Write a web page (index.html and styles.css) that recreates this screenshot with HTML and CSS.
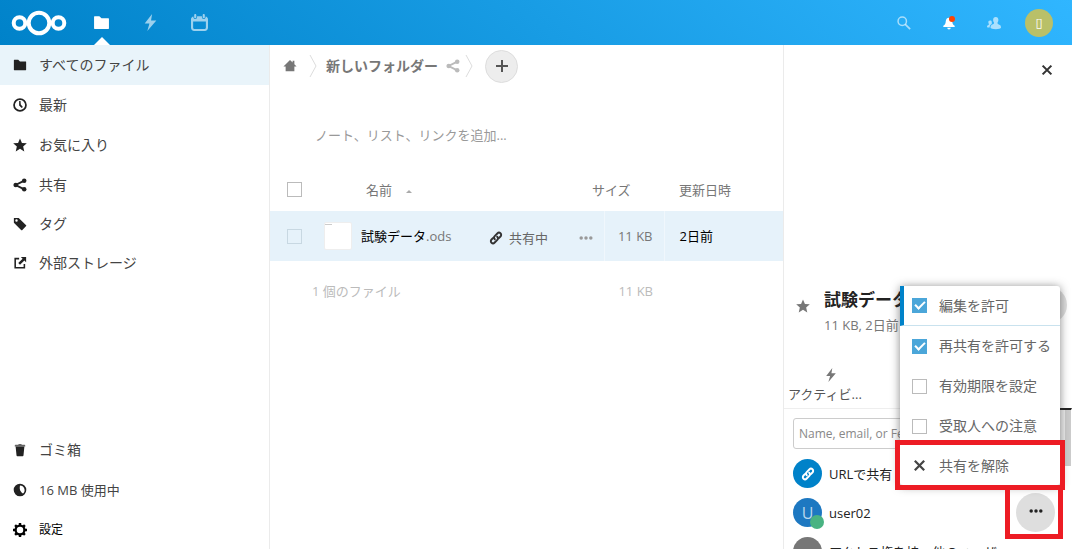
FILE: index.html
```html
<!DOCTYPE html>
<html lang="ja">
<head>
<meta charset="utf-8">
<title>ファイル</title>
<link rel="stylesheet" href="styles.css">
</head>
<body>
<svg class="defs" aria-hidden="true">
  <symbol id="folder" viewBox="0 0 16 16"><path d="M1.500 2C1.200 2 1 2.300 1 2.500v11c0 .3.2.5.5.5h13c.3 0 .5-.2.5-.5v-9c0-.3-.2-.5-.5-.5H8L6 2z"/></symbol>
  <symbol id="bolt" viewBox="0 0 16 16"><path d="M9.500 0 2.500 9h4.500l-2 7 8.500-10H8.500z"/></symbol>
  <symbol id="calendar" viewBox="0 0 16 16"><path d="M4 0C3.400 0 3 .5 3 1v2c0 .6.4 1 1 1s1-.4 1-1V1c0-.5-.4-1-1-1zm8 0c-.6 0-1 .5-1 1v2c0 .6.4 1 1 1s1-.4 1-1V1c0-.5-.4-1-1-1zM5.700 2.200V3c0 1-.8 1.700-1.700 1.700S2.300 4 2.300 3v-.6C1 2.600 0 3.700 0 5v8c0 1.700 1.300 3 3 3h10c1.700 0 3-1.300 3-3V5c0-1.300-1-2.400-2.300-2.600V3c0 1-.8 1.700-1.700 1.700S10.300 4 10.300 3v-.8zM2 7h12v6c0 .6-.4 1-1 1H3c-.6 0-1-.4-1-1z"/></symbol>
  <symbol id="clock" viewBox="0 0 16 16"><circle cx="8" cy="8" r="6.800" fill="none" stroke="currentColor" stroke-width="2"/><path d="M7 3.500h1.600l.3 4 2.400 2.800-1.400 1.200L7 8.500z"/></symbol>
  <symbol id="star" viewBox="0 0 16 16"><path d="m8 .5 2.200 5.100 5.600.5-4.200 3.700 1.300 5.500L8 12.400l-4.900 2.900 1.300-5.500L.2 6.100l5.600-.5z"/></symbol>
  <symbol id="share" viewBox="0 0 16 16"><circle cx="3.200" cy="8" r="2.700"/><circle cx="12.800" cy="3.200" r="2.600"/><circle cx="12.800" cy="12.800" r="2.600"/><path d="m13 3-10 5 10 5" fill="none" stroke="currentColor" stroke-width="2.200"/></symbol>
  <symbol id="tag" viewBox="0 0 16 16"><path fill-rule="evenodd" d="M1.500 1C1.200 1 1 1.200 1 1.500v5L9.500 15c.3.3.6.3.9 0l4.600-4.600c.3-.3.3-.6 0-.9L6.500 1zM4 2.600a1.400 1.400 0 1 1 0 2.800 1.400 1.400 0 0 1 0-2.800z"/></symbol>
  <symbol id="external" viewBox="0 0 16 16"><path d="M7 3H2.500v10.500H13V9" fill="none" stroke="currentColor" stroke-width="1.800"/><path d="M9 1h6v6l-2-2-5 5-2-2 5-5z"/></symbol>
  <symbol id="trash" viewBox="0 0 16 16"><path opacity=".7" d="M6.500 1 6 2H3c-.5 0-1 .5-1 1v1h12V3c0-.5-.5-1-1-1h-3l-.5-1z"/><path d="M3 4h10l-1 10c0 .6-.4 1-1 1H5c-.6 0-1-.4-1-1z"/></symbol>
  <symbol id="quota" viewBox="0 0 16 16"><path fill-rule="evenodd" d="M8 .8a7.200 7.200 0 1 1 0 14.400A7.200 7.200 0 0 1 8 .8zM8 2.800c-.6 2.500-.3 5 .8 6.700.8 1.400 1.800 2.300 2.700 2.500A5.300 5.300 0 0 0 8 2.800z"/></symbol>
  <symbol id="gear" viewBox="0 0 16 16"><circle cx="8" cy="8" r="5" fill="none" stroke="currentColor" stroke-width="2.600"/><path d="M8 0v3M8 13v3M0 8h3M13 8h3M2.400 2.400l2 2M11.600 11.600l2 2M2.400 13.600l2-2M11.600 4.400l2-2" stroke="currentColor" stroke-width="2.800"/></symbol>
  <symbol id="home" viewBox="0 0 16 16"><path d="M8 1 .5 8.500H3V14h10V8.500h2.500L13 6V2h-2v2z"/></symbol>
  <symbol id="link" viewBox="0 0 16 16"><g fill="none" stroke="currentColor" stroke-width="2.200" stroke-linecap="round"><path d="M6.600 9.400C5.300 8 5.600 6.700 6.500 5.800l3-3c1-1 2.500-1.200 3.600-.2s1 2.700 0 3.700l-1.800 1.800"/><path d="M9.400 6.600c1.300 1.400 1 2.700.1 3.600l-3 3c-1 1-2.500 1.200-3.600.2s-1-2.700 0-3.700l1.800-1.800"/></g></symbol>
  <symbol id="more" viewBox="0 0 16 16"><circle cx="2.500" cy="8" r="2"/><circle cx="8" cy="8" r="2"/><circle cx="13.500" cy="8" r="2"/></symbol>
  <symbol id="close" viewBox="0 0 16 16"><path d="m3 3 10 10m0-10-10 10" stroke="currentColor" stroke-width="2.400"/></symbol>
  <symbol id="search" viewBox="0 0 16 16"><circle cx="6" cy="6" r="4.800" fill="none" stroke="currentColor" stroke-width="1.700"/><path d="m9.500 9.500 5.500 5.500" stroke="currentColor" stroke-width="2"/></symbol>
  <symbol id="bell" viewBox="0 0 16 16"><path d="M8 2C5.500 2 4.500 4 4.300 6 4 9 3.500 10 1.500 11v1.500h13V11c-2-1-2.500-2-2.800-5C11.500 4 10.500 2 8 2zM6 13.500a2 2 0 0 0 4 0z"/></symbol>
  <symbol id="contacts" viewBox="0 0 16 16"><path d="M10 1C8 1 7 2.400 7 4.200c0 1.500.5 2.400 1 3.300 0 1.500-.4 2-2.500 2.500-.9.400-1.500 1.500-1.500 3.500 0 2 12 2 12 0 0-2.500-.8-3.200-2-3.500-1.700-.6-2-1-2-2.500.5-.9 1-1.800 1-3.300C13 2.400 12 1 10 1z"/><path d="M3.500 5C2 5 1.500 6 1.500 7c0 1 .3 1.500.7 2 0 1-.2 1.200-1.200 1.500-.8.3-1 1-1 2 0 .4 1.500.6 3 .6.200-2 .8-3.500 2.500-4.100C5.500 7.500 6 5 3.500 5z"/></symbol>
</svg>

<header class="topbar">
  <a class="logo" href="#" aria-label="ホーム">
    <svg viewBox="0 0 56 26"><g fill="none" stroke="#fff" stroke-width="4"><circle cx="28" cy="13" r="10.300"/><circle cx="8.500" cy="13" r="5.800"/><circle cx="47.500" cy="13" r="5.800"/></g></svg>
  </a>
  <nav class="apps">
    <a class="app app-active" href="#" aria-label="ファイル"><svg class="icon-app"><use href="#folder"/></svg></a>
    <a class="app" href="#" aria-label="アクティビティ"><svg class="icon-app"><use href="#bolt"/></svg></a>
    <a class="app" href="#" aria-label="カレンダー"><svg class="icon-app"><use href="#calendar"/></svg></a>
  </nav>
  <div class="tools">
    <button class="tool" aria-label="検索"><svg class="icon"><use href="#search"/></svg></button>
    <button class="tool tool-alert" aria-label="通知"><svg class="icon"><use href="#bell"/></svg></button>
    <button class="tool" aria-label="連絡先"><svg class="icon"><use href="#contacts"/></svg></button>
    <button class="account">▯</button>
  </div>
</header>

<div class="layout">
  <nav class="sidebar">
    <ul class="nav-list">
      <li class="nav-item nav-active"><a href="#"><svg class="icon"><use href="#folder"/></svg>すべてのファイル</a></li>
      <li class="nav-item"><a href="#"><svg class="icon"><use href="#clock"/></svg>最新</a></li>
      <li class="nav-item"><a href="#"><svg class="icon"><use href="#star"/></svg>お気に入り</a></li>
      <li class="nav-item"><a href="#"><svg class="icon"><use href="#share"/></svg>共有</a></li>
      <li class="nav-item"><a href="#"><svg class="icon"><use href="#tag"/></svg>タグ</a></li>
      <li class="nav-item"><a href="#"><svg class="icon"><use href="#external"/></svg>外部ストレージ</a></li>
    </ul>
    <ul class="nav-list nav-bottom">
      <li class="nav-item"><a href="#"><svg class="icon"><use href="#trash"/></svg>ゴミ箱</a></li>
      <li class="nav-item nav-quota"><a href="#"><svg class="icon"><use href="#quota"/></svg>16 MB 使用中</a></li>
      <li class="nav-item nav-settings"><button><svg class="icon"><use href="#gear"/></svg>設定</button></li>
    </ul>
  </nav>

  <main class="content">
    <div class="crumbs">
      <a class="crumb-home" href="#" aria-label="ホーム"><svg class="icon"><use href="#home"/></svg></a>
      <svg class="chevron" viewBox="0 0 8 24"><path d="m1 1 6 11-6 11"/></svg>
      <a class="crumb" href="#">新しいフォルダー</a>
      <svg class="icon crumb-share"><use href="#share"/></svg>
      <svg class="chevron" viewBox="0 0 8 24"><path d="m1 1 6 11-6 11"/></svg>
      <button class="add" aria-label="新規"><svg viewBox="0 0 12 12"><path d="M6 0v12M0 6h12"/></svg></button>
    </div>
    <p class="note">ノート、リスト、リンクを追加...</p>
    <table class="files">
      <colgroup><col class="col-check"><col><col class="col-actions"><col class="col-size"><col class="col-date"></colgroup>
      <thead>
        <tr>
          <th class="check"><input type="checkbox" aria-label="すべて選択"></th>
          <th class="name-head">名前<span class="sort"></span></th>
          <th></th>
          <th><span class="size-head">サイズ</span></th>
          <th class="date">更新日時</th>
        </tr>
      </thead>
      <tbody>
        <tr>
          <td class="check"><input type="checkbox" aria-label="試験データ.ods を選択"></td>
          <td><a class="file" href="#"><span class="thumb"></span><span>試験データ<span class="ext">.ods</span></span></a></td>
          <td><div class="actions"><button class="shared"><svg class="icon"><use href="#link"/></svg>共有中</button><button class="row-more" aria-label="操作"><svg class="icon"><use href="#more"/></svg></button></div></td>
          <td class="size">11 KB</td>
          <td class="date">2日前</td>
        </tr>
      </tbody>
      <tfoot>
        <tr><td></td><td class="count" colspan="2">1 個のファイル</td><td class="size">11 KB</td><td></td></tr>
      </tfoot>
    </table>
  </main>

  <aside class="details">
    <div class="preview"><button class="close" aria-label="閉じる"><svg class="icon"><use href="#close"/></svg></button></div>
    <div class="summary">
      <svg class="icon"><use href="#star"/></svg>
      <div class="summary-text">
        <h2 class="title">試験データ.ods</h2>
        <p class="meta">11 KB, 2日前</p>
      </div>
      <span class="summary-circle"></span>
    </div>
    <div class="tabs"><button class="tab"><svg class="icon"><use href="#bolt"/></svg>アクティビ...</button></div>
    <div class="sharing">
      <input class="share-input" type="text" aria-label="共有相手" placeholder="Name, email, or Federated Cloud ID">
      <ul class="shares">
        <li class="share-row"><span class="avatar avatar-link"><svg class="icon"><use href="#link"/></svg></span>URLで共有</li>
        <li class="share-row"><span class="avatar avatar-user">U<span class="status"></span></span>user02<button class="share-more" aria-label="共有オプション"><svg class="icon"><use href="#more"/></svg></button></li>
        <li class="share-row"><span class="avatar avatar-other"></span>アクセス権を持つ他のユーザー</li>
      </ul>
    </div>
    <div class="scroll-thumb"></div>
    <div class="menu">
      <label class="menu-item menu-current"><input type="checkbox" checked>編集を許可</label>
      <label class="menu-item"><input type="checkbox" checked>再共有を許可する</label>
      <label class="menu-item"><input type="checkbox">有効期限を設定</label>
      <label class="menu-item"><input type="checkbox">受取人への注意</label>
      <button class="menu-item"><svg class="icon"><use href="#close"/></svg>共有を解除</button>
    </div>
    <div class="mark mark-unshare"></div>
    <div class="mark mark-more"></div>
  </aside>
</div>
</body>
</html>
```
FILE: styles.css
```css
* { box-sizing: border-box; }
body {
  margin: 0;
  height: 100vh;
  overflow: hidden;
  display: flex;
  flex-direction: column;
  background: #fff;
  color: #222;
  font: 13px/20px "Open Sans", "Noto Sans CJK JP", sans-serif;
}
button { border: 0; padding: 0; background: none; font: inherit; color: inherit; }
a { color: inherit; text-decoration: none; }
ul { list-style: none; margin: 0; padding: 0; }
svg { fill: currentColor; flex: none; display: block; }
p, h2 { margin: 0; }
.defs { position: absolute; width: 0; height: 0; }
.icon { width: 14px; height: 14px; }

input[type="checkbox"] {
  appearance: none;
  flex: none;
  display: block;
  width: 15px;
  height: 15px;
  margin: 0;
  border: 1px solid #bbb;
  background: #fff;
}

.topbar {
  flex: none;
  height: 45px;
  display: flex;
  align-items: center;
  padding: 0 19px 0 11px;
  background: linear-gradient(40deg, #0082c9 0%, #30b6ff 100%);
  color: #fff;
}
.logo svg { width: 56px; height: 26px; }
.apps { display: flex; align-self: stretch; margin-left: 10px; }
.app {
  width: 49px;
  display: flex;
  align-items: center;
  justify-content: center;
  color: rgba(255, 255, 255, .6);
}
.icon-app { width: 17px; height: 17px; }
.app-active { color: #fff; position: relative; }
.app-active::after {
  content: "";
  position: absolute;
  bottom: 0;
  left: 50%;
  margin-left: -8px;
  border: 8px solid transparent;
  border-top: 0;
  border-bottom-color: #fff;
}
.tools { margin-left: auto; display: flex; align-items: center; }
.tool { width: 45px; display: flex; justify-content: center; color: rgba(255, 255, 255, .6); }
.tool-alert { color: #fff; position: relative; }
.tool-alert::after {
  content: "";
  position: absolute;
  top: 0;
  right: 16px;
  width: 6px;
  height: 6px;
  border-radius: 50%;
  background: #ff4402;
}
.account {
  width: 28px;
  height: 28px;
  margin-left: 9px;
  border-radius: 50%;
  background: #b9c068;
  font: 13px/28px "DejaVu Sans", sans-serif;
}

.layout { flex: 1; min-height: 0; display: flex; }
.sidebar {
  flex: none;
  width: 270px;
  display: flex;
  flex-direction: column;
  border-right: 1px solid #ebebeb;
  color: #444;
  font-size: 14px;
}
.nav-list { display: flex; flex-direction: column; }
.nav-bottom { margin-top: auto; }
.nav-item a, .nav-item button {
  display: flex;
  align-items: center;
  gap: 12px;
  height: 40px;
  padding: 0 13px;
}
.nav-item:nth-child(n+4) a, .nav-settings button { height: 39px; }
.nav-item .icon { color: #222; }
.nav-active { background: #e9f4fa; }
.nav-quota { font-size: 13px; }
.nav-settings { color: #000; font-size: 12px; }
.nav-settings .icon { color: #000; }

.content { flex: 1; min-width: 0; }
.crumbs { display: flex; align-items: center; height: 42px; padding-left: 13px; color: #777; }
.chevron { width: 8px; height: 24px; fill: none; stroke: #ddd; }
.crumb-home { margin-right: 12px; }
.crumb { margin: 0 8px 0 9px; font-size: 14px; font-weight: 600; }
.crumb-share { color: #bbb; margin-right: 5px; }
.add {
  width: 33px;
  height: 33px;
  margin-left: 12px;
  display: grid;
  place-items: center;
  border: 1px solid #ddd;
  border-radius: 50%;
  background: #ededed;
  color: #555;
}
.add svg { width: 12px; height: 12px; stroke: currentColor; stroke-width: 2; }
.note { padding: 38px 45px 0; color: #999; }

.files { width: 100%; margin-top: 23px; table-layout: fixed; border-collapse: collapse; }
.col-check { width: 48px; }
.col-actions { width: 120px; }
.col-size { width: 60px; }
.col-date { width: 119px; }
.files th { height: 43px; padding: 0; font-weight: 400; text-align: left; color: #777; }
.files td { height: 50px; padding: 0; }
.files .check { padding-left: 17px; }
thead input { border-color: #888; }
tbody input[type="checkbox"] { border-color: #c8d8e2; background: transparent; }
.files .name-head { padding-left: 48px; }
.sort {
  display: inline-block;
  margin-left: 14px;
  vertical-align: 2px;
  border: 3px solid transparent;
  border-top: 0;
  border-bottom-color: #aaa;
}
.size-head { margin-left: -12px; white-space: nowrap; }
.files .date { padding-left: 15px; color: #000; }
.files th.date { color: #777; }
tbody tr { background: #e6f2fa; }
tbody .size, tbody .date { border-left: 1px solid #f0f7fc; }
.files .size { padding-right: 11px; text-align: right; color: #777; }
.file { display: flex; align-items: center; gap: 9px; padding-left: 6px; color: #000; white-space: nowrap; }
.thumb { width: 28px; height: 28px; border: 1px solid #eee; border-radius: 2px; background: #fff; }
.thumb::before { content: ""; display: block; width: 7px; height: 1px; margin: 1px 0; background: #ccc; }
.ext { color: #777; }
.actions { display: flex; align-items: center; padding-left: 5px; padding-top: 4px; color: #666; }
.shared { display: flex; align-items: center; gap: 6px; }
.shared .icon { color: #333; }
.row-more { margin-left: 31px; color: #999; }
.files tfoot td { height: 60px; color: #bbb; }
.files .count { text-indent: -6px; }

.details {
  position: relative;
  flex: none;
  width: 289px;
  display: flex;
  flex-direction: column;
  border-left: 1px solid #ebebeb;
}
.preview { flex: none; height: 238px; padding: 18px; display: flex; justify-content: flex-end; align-items: flex-start; }
.close { color: #333; }
.summary { flex: none; display: flex; align-items: center; height: 60px; padding: 0 5px 0 12px; color: #777; }
.summary-circle { flex: none; width: 36px; height: 36px; margin-bottom: 16px; border-radius: 50%; background: #ddd; }
.summary > .icon { margin-bottom: 14px; }
.summary-text { flex: 1; min-width: 0; margin-left: 14px; white-space: nowrap; overflow: hidden; }
.title { font-size: 17px; line-height: 24px; font-weight: 600; color: #222; }
.meta { line-height: 26px; }
.tabs { flex: none; padding: 25px 0 4px 4px; border-bottom: 1px solid #eee; }
.tab { display: flex; flex-direction: column; align-items: center; gap: 2px; color: #555; }
.tab .icon { color: #777; margin-left: 12px; }
.sharing { flex: 1; min-height: 0; overflow: hidden; padding: 9px 9px 0; }
.share-input {
  display: block;
  width: 100%;
  height: 31px;
  padding: 0 5px;
  border: 1px solid #ccc;
  border-radius: 3px;
  font: inherit;
  font-size: 12px;
}
.share-input::placeholder { color: #888; }
.shares { padding-top: 5px; }
.share-row { display: flex; align-items: center; height: 39px; color: #222; white-space: nowrap; }
.avatar {
  position: relative;
  flex: none;
  width: 29px;
  height: 29px;
  margin-right: 7px;
  display: grid;
  place-items: center;
  border-radius: 50%;
  color: #fff;
}
.avatar-link { background: #0082c9; }
.avatar-user { background: #1d78c1; color: #b9d6ec; font-size: 16px; }
.avatar-other { background: #777; }
.status {
  position: absolute;
  right: -2px;
  bottom: -2px;
  width: 14px;
  height: 14px;
  border-radius: 50%;
  background: #49b382;
}
.share-more {
  width: 39px;
  height: 39px;
  margin-left: auto;
  margin-right: 8px;
  padding-bottom: 3px;
  display: grid;
  place-items: center;
  border-radius: 50%;
  background: #dedede;
}
.scroll-thumb {
  position: absolute;
  top: 363px;
  right: 0;
  width: 12px;
  height: 58px;
  border-top: 2px solid #222;
  border-right: 1px solid #fff;
  background: linear-gradient(90deg, #eee 5px, #ccc 5px);
}

.menu {
  position: absolute;
  top: 241px;
  right: 12px;
  width: 160px;
  border-radius: 3px;
  background: #fff;
  box-shadow: 0 1px 10px rgba(50, 50, 50, .6);
  color: #666;
  font-size: 14px;
}
.menu-item { display: flex; align-items: center; gap: 12px; width: 100%; height: 40px; padding-left: 12px; }
.menu-item .icon { width: 15px; height: 15px; color: #444; }
.menu-item:last-child { height: 39px; }
.menu-current { padding-left: 8px; border-left: 4px solid #0082c9; border-bottom: 1px solid #c9e2ee; }
.menu input:checked { border-color: #4ba6d9; background: #4ba6d9; display: grid; place-items: center; }
.menu input:checked::before {
  content: "";
  width: 8px;
  height: 4px;
  margin-bottom: 3px;
  border: solid #fff;
  border-width: 0 0 2px 2px;
  transform: rotate(-45deg);
}
.mark { position: absolute; border: 5px solid #ed1c24; }
.mark-unshare { top: 395px; right: 7px; width: 170px; height: 50px; }
.mark-more { top: 440px; right: 9px; width: 58px; height: 54px; }
.files tfoot .size { color: #bbb; }
```
